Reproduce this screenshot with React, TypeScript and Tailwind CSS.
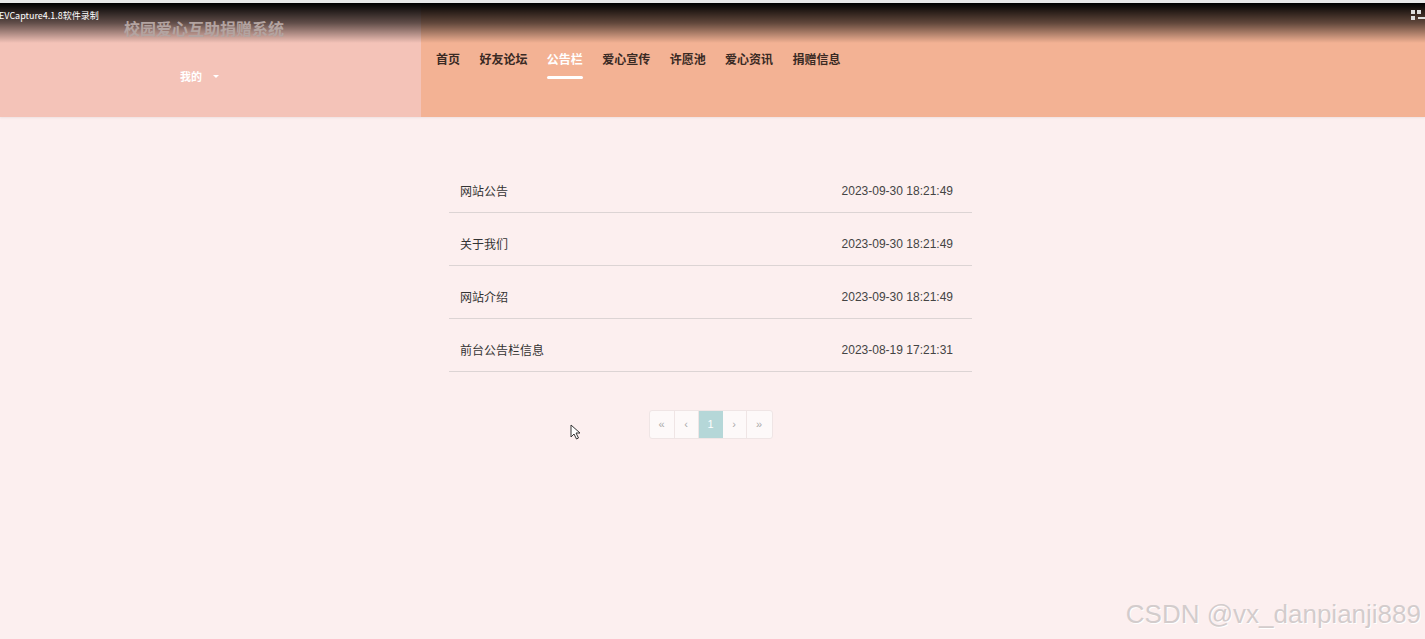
import React from "react";

const navItems = ["首页", "好友论坛", "公告栏", "爱心宣传", "许愿池", "爱心资讯", "捐赠信息"];
const rows = [
  { title: "网站公告", time: "2023-09-30 18:21:49" },
  { title: "关于我们", time: "2023-09-30 18:21:49" },
  { title: "网站介绍", time: "2023-09-30 18:21:49" },
  { title: "前台公告栏信息", time: "2023-08-19 17:21:31" },
];

const cjk = "font-['Noto_Sans_CJK_SC','Noto_Sans',sans-serif]";

export default function App() {
  return (
    <div className={`relative min-h-[639px] w-full overflow-hidden bg-[#fcefef] ${cjk}`}>
      {/* header */}
      <header className="flex h-[117px] shadow-[0_1px_2px_rgba(0,0,0,0.06)]">
        <div className="flex w-[421px] flex-col items-center bg-[#f4c3b8]">
          <div className="relative z-20 mt-[17px] pr-[13px] text-[16px] font-bold leading-[22px] text-[#b3a4a1]">校园爱心互助捐赠系统</div>
          <div className="mt-[28px] flex items-center gap-[11px] pr-[22px] text-[11px] font-bold leading-[18px] text-white">
            <span>我的</span>
            <span className="mt-[1px] inline-block h-0 w-0 border-x-[3px] border-t-[3px] border-x-transparent border-t-white" />
          </div>
        </div>
        <div className="flex-1 bg-[#f3b294] pl-[15px]">
          <nav className="flex gap-[19.4px] pt-[45px]">
            {navItems.map((n) => {
              const active = n === "公告栏";
              return (
                <div key={n} className="relative">
                  <span className={`text-[12px] font-bold leading-[18px] ${active ? "text-white" : "text-[#3a2a24]"}`}>{n}</span>
                  {active && <span className="absolute left-0 right-0 top-[31px] h-[3px] rounded-full bg-white" />}
                </div>
              );
            })}
          </nav>
        </div>
      </header>

      {/* list */}
      <main className="mx-auto mt-[43px] w-[527px] pr-[4px]">
        {rows.map((r) => (
          <div key={r.title} className="flex items-center justify-between border-b border-[#dcd4d4] pb-[14px] pl-[11px] pr-[19px] pt-[24px]">
            <span className="text-[12px] leading-[14px] text-[#333]">{r.title}</span>
            <span className="font-['Liberation_Sans',Arial,sans-serif] text-[12px] leading-[14px] text-[#444]">{r.time}</span>
          </div>
        ))}
        <div className="mt-[38px] flex justify-center">
          <div className="flex overflow-hidden rounded-[3px] border border-[#efe5e5] bg-[#fdf9f9] font-['Liberation_Sans',Arial,sans-serif] text-[11px] text-[#aaa]">
            <span className="flex h-[27px] w-[25px] items-center justify-center border-r border-[#efe5e5]">«</span>
            <span className="flex h-[27px] w-[24px] items-center justify-center border-r border-[#efe5e5]">‹</span>
            <span className="flex h-[27px] w-[24px] items-center justify-center bg-[#b5d7d8] text-white">1</span>
            <span className="flex h-[27px] w-[24px] items-center justify-center border-r border-[#efe5e5]">›</span>
            <span className="flex h-[27px] w-[25px] items-center justify-center">»</span>
          </div>
        </div>
      </main>

      {/* screen-recorder overlay */}
      <div className="pointer-events-none absolute left-0 right-0 top-0 h-[3px] bg-[#e9e9e9]" />
      <div className="pointer-events-none absolute left-0 right-0 top-[3px] z-10 h-[40px] bg-gradient-to-b from-black via-black/60 to-transparent" />
      <div className="pointer-events-none absolute left-[-1px] top-[10px] z-30 font-['Noto_Sans_CJK_SC',sans-serif] text-[9px] leading-[12px] text-white">EVCapture4.1.8软件录制</div>
      <svg className="pointer-events-none absolute left-[1410px] top-[9px] z-30" width="15" height="12" viewBox="0 0 15 12">
        <rect x="1" y="1" width="4" height="4" fill="#ddd" />
        <rect x="7" y="1" width="4" height="4" fill="#ddd" />
        <rect x="1" y="7" width="4" height="4" fill="#ddd" />
        <rect x="8" y="8" width="7" height="2" fill="#ddd" />
      </svg>

      {/* mouse cursor */}
      <svg className="pointer-events-none absolute left-[570px] top-[424px]" width="12" height="16" viewBox="0 0 12 16">
        <path d="M1 1 L1 13 L4 10 L6.5 15 L8.5 14 L6 9 L10 9 Z" fill="#fff" stroke="#333" strokeWidth="1" strokeLinejoin="round" />
      </svg>

      {/* watermark */}
      <div className="pointer-events-none absolute bottom-[10px] right-[4px] font-['Liberation_Sans',Arial,sans-serif] text-[26px] leading-[30px] text-[#d3cccc] [text-shadow:1px_1px_0_#ffffff]">
        CSDN @vx_danpianji889
      </div>
    </div>
  );
}
